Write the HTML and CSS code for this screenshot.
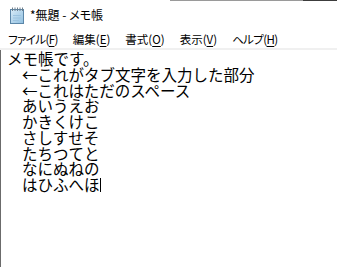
FILE: index.html
```html
<!DOCTYPE html>
<html lang="ja">
<head>
  <meta charset="UTF-8" />
  <title>*無題 - メモ帳</title>
  <link rel="stylesheet" href="styles.css">
</head>
<body>
  <div class="window">
    <div class="title-bar">
      <svg class="app-icon" width="16" height="17" viewBox="0 0 16 17">
        <defs>
          <linearGradient id="pad" x1="0" y1="0" x2="1" y2="1">
            <stop offset="0" stop-color="#d9ecf8" />
            <stop offset="1" stop-color="#8fbfe0" />
          </linearGradient>
        </defs>
        <rect x="1.5" y="2.5" width="13" height="14" fill="url(#pad)" stroke="#5b86a8" />
        <path d="M4 8.5h8M4 11h8M4 13.5h6" stroke="#9cc3df" stroke-width="1" />
        <path d="M3.5 0.5v3.5M6 0.5v3.5M8.5 0.5v3.5M11 0.5v3.5M13.5 0.5v3.5" stroke="#6e7f8c" stroke-width="1" />
      </svg>
      <span class="title-text">*無題 - メモ帳</span>
    </div>
    <div class="menu-bar">
      <span class="menu-item kana">ファイル(<u>F</u>)</span>
      <span class="menu-item">編集(<u>E</u>)</span>
      <span class="menu-item">書式(<u>O</u>)</span>
      <span class="menu-item">表示(<u>V</u>)</span>
      <span class="menu-item kana">ヘルプ(<u>H</u>)</span>
    </div>
    <div class="editor">
      <div class="line">メモ帳です。</div>
      <div class="line tab">←これがタブ文字を入力した部分</div>
      <div class="line tab">←これはただのスペース</div>
      <div class="line tab">あいうえお</div>
      <div class="line tab">かきくけこ</div>
      <div class="line tab">さしすせそ</div>
      <div class="line tab">たちつてと</div>
      <div class="line tab">なにぬねの</div>
      <div class="line tab">はひふへほ<span class="caret"></span></div>
    </div>
  </div>
</body>
</html>
```

FILE: styles.css
```css
body {
  margin: 0;
  background: #fff;
  font-family: "Noto Sans CJK JP", "Noto Sans", sans-serif;
  color: #000;
  overflow: hidden;
}
.window {
  width: 337px;
  height: 267px;
  display: flex;
  flex-direction: column;
}
.title-bar {
  height: 30px;
  display: flex;
  align-items: center;
  padding-left: 9px;
  background: linear-gradient(to right, transparent 170px, #9a9a9a 170px, #9a9a9a 303px, #3c3c3c 303px) top / 100% 1px no-repeat;
}
.app-icon {
  display: block;
  margin-right: 5px;
}
.title-text {
  font-size: 12px;
  line-height: 14px;
  font-feature-settings: "palt";
}
.menu-bar {
  height: 18px;
  display: flex;
  align-items: center;
  gap: 15px;
  padding-left: 8px;
  font-size: 11.5px;
  border-bottom: 2px solid #f0f0f0;
}
.menu-item.kana {
  font-feature-settings: "palt";
  letter-spacing: -0.6px;
}
.menu-item u {
  text-decoration-thickness: 1px;
  text-underline-offset: 2px;
}
.editor {
  flex: 1;
  border-left: 1px solid #6b6b6b;
  padding: 1px 0 0 6px;
  font-size: 15.5px;
  line-height: 15.75px;
}
.line {
  white-space: pre;
}
.tab {
  padding-left: 15px;
}
.caret {
  display: inline-block;
  width: 1px;
  height: 14px;
  background: #000;
  vertical-align: -1px;
}
```
